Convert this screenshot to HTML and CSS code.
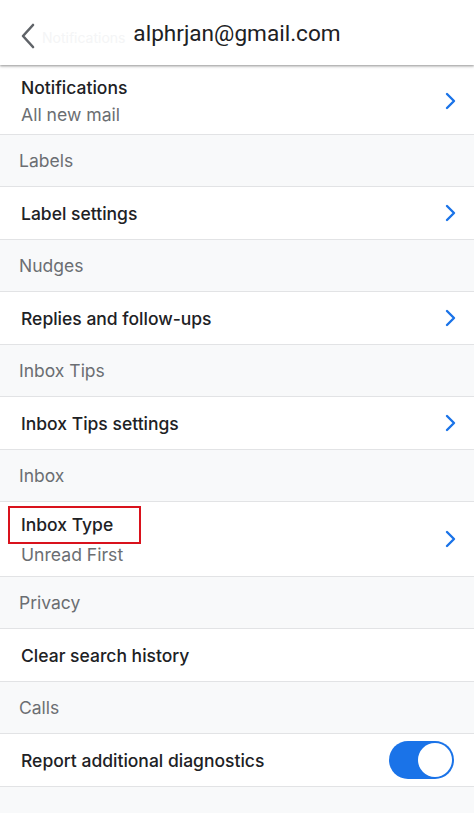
FILE: index.html
```html
<!DOCTYPE html>
<html lang="en-US">

<head>
    <title>Settings: alphrjan@gmail.com</title>
    <meta name="viewport" content="width=device-width, initial-scale=1.0" />
    <link rel="stylesheet" href="styles.css">
</head>

<body>
    <header class="topbar">
        <div class="topbar-left">
            <svg class="back" width="16" height="26" viewBox="0 0 16 26">
                <path d="M13 2 L3 13 L13 24" fill="none" stroke="#5f6368" stroke-width="2.6" stroke-linecap="round" stroke-linejoin="round" />
            </svg>
            <span class="ghost">Notifications</span>
        </div>
        <h1 class="title">alphrjan@gmail.com</h1>
        <div></div>
    </header>

    <ul class="settings">
        <li class="row row-tall first">
            <div class="row-text">
                <span class="label">Notifications</span>
                <span class="value">All new mail</span>
            </div>
            <svg class="chev" width="12" height="18" viewBox="0 0 12 18"><path d="M3 2 L10 9 L3 16" /></svg>
        </li>
        <li class="section">Labels</li>
        <li class="row">
            <span class="label">Label settings</span>
            <svg class="chev" width="12" height="18" viewBox="0 0 12 18"><path d="M3 2 L10 9 L3 16" /></svg>
        </li>
        <li class="section">Nudges</li>
        <li class="row">
            <span class="label">Replies and follow-ups</span>
            <svg class="chev" width="12" height="18" viewBox="0 0 12 18"><path d="M3 2 L10 9 L3 16" /></svg>
        </li>
        <li class="section">Inbox Tips</li>
        <li class="row">
            <span class="label">Inbox Tips settings</span>
            <svg class="chev" width="12" height="18" viewBox="0 0 12 18"><path d="M3 2 L10 9 L3 16" /></svg>
        </li>
        <li class="section">Inbox</li>
        <li class="row row-type">
            <div class="row-text">
                <span class="label marked">Inbox Type</span>
                <span class="value">Unread First</span>
            </div>
            <svg class="chev" width="12" height="18" viewBox="0 0 12 18"><path d="M3 2 L10 9 L3 16" /></svg>
        </li>
        <li class="section">Privacy</li>
        <li class="row">
            <span class="label">Clear search history</span>
        </li>
        <li class="section">Calls</li>
        <li class="row">
            <span class="label">Report additional diagnostics</span>
            <span class="toggle"><span class="knob"></span></span>
        </li>
        <li class="footer"></li>
    </ul>
</body>

</html>
```

FILE: styles.css
```css
html {
    font-family: Inter, "Liberation Sans", sans-serif;
    color: #202124;
    background-color: #f8f9fa;
}

body {
    margin: 0;
    width: 474px;
}

.topbar {
    display: grid;
    grid-template-columns: minmax(0, 1fr) auto minmax(0, 1fr);
    align-items: center;
    height: 65px;
    background: #fff;
    box-shadow: 0 1px 2px rgba(0, 0, 0, 0.3), 0 2px 3px rgba(0, 0, 0, 0.12);
    position: relative;
    z-index: 1;
}

.topbar-left {
    display: flex;
    align-items: center;
    padding-left: 20px;
    margin-top: 6px;
    white-space: nowrap;
}

.back {
    display: block;
    flex: none;
}

.ghost {
    margin-left: 6px;
    margin-top: 4px;
    font-size: 14px;
    color: #f4f5f6;
}

.title {
    margin: 0;
    padding-top: 2px;
    font-family: Roboto, "Liberation Sans", sans-serif;
    font-weight: 400;
    font-size: 22.6px;
    color: #202124;
}

.settings {
    list-style: none;
    margin: 0;
    padding: 0;
}

.row {
    display: flex;
    align-items: center;
    justify-content: space-between;
    height: 52px;
    padding: 0 18px 0 21px;
    background: #fff;
    border-bottom: 1px solid #e2e3e5;
}

.row-tall {
    height: 67px;
    padding-top: 2px;
}

.row-type {
    height: 74px;
}

.row-text {
    display: flex;
    flex-direction: column;
    gap: 6px;
}

.label {
    font-size: 17.5px;
    font-weight: 500;
    color: #202124;
}

.value {
    font-size: 17.6px;
    color: #6b6e72;
}

.marked {
    outline: 2px solid #d9121c;
    outline-offset: 0;
    margin-left: -11px;
    padding: 6px 26px 7px 11px;
    margin-top: -6px;
    margin-bottom: -4px;
    align-self: flex-start;
}

.chev path {
    fill: none;
    stroke: #1a73e8;
    stroke-width: 2.4;
    stroke-linecap: round;
    stroke-linejoin: round;
}

.section {
    display: flex;
    align-items: center;
    height: 51px;
    padding-left: 19px;
    font-size: 17.5px;
    color: #6b6e72;
    border-bottom: 1px solid #e2e3e5;
}

.toggle {
    display: flex;
    justify-content: flex-end;
    align-items: center;
    width: 65px;
    height: 38px;
    box-sizing: border-box;
    padding: 2px;
    border-radius: 19px;
    background: #1a73e8;
    margin-right: 2px;
}

.knob {
    width: 34px;
    height: 34px;
    border-radius: 50%;
    background: #fff;
}

.footer {
    height: 27px;
}
```
